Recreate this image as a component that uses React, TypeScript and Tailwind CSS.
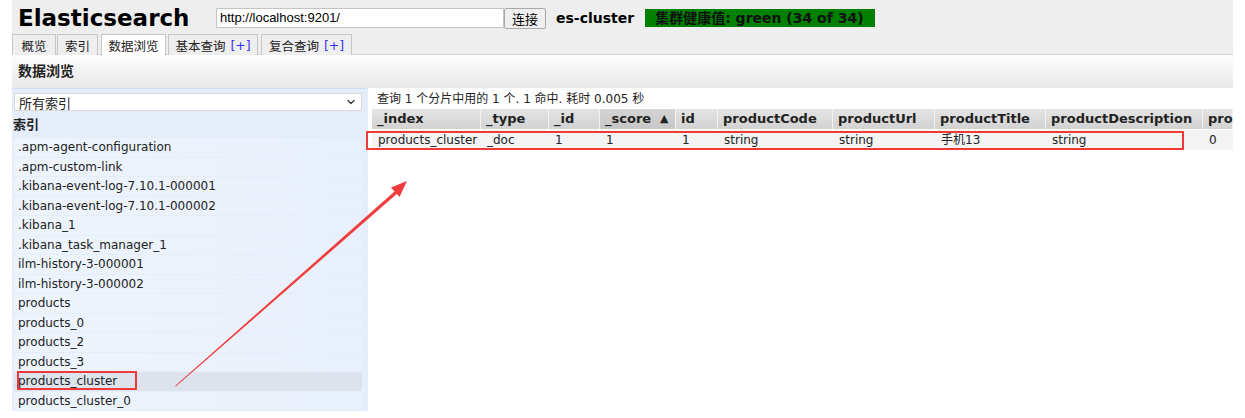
import React from 'react';
import { ChevronDown } from 'lucide-react';

const tabs = [
  { label: '概览', cls: 'w-[44px] ml-0', plus: false, active: false },
  { label: '索引', cls: 'w-[41px] ml-[1px]', plus: false, active: false },
  { label: '数据浏览', cls: 'w-[65px] ml-[3px]', plus: false, active: true },
  { label: '基本查询', cls: 'w-[90px] ml-[2px]', plus: true, active: false },
  { label: '复合查询', cls: 'w-[91px] ml-[3px]', plus: true, active: false },
];

const indices = [
  '.apm-agent-configuration',
  '.apm-custom-link',
  '.kibana-event-log-7.10.1-000001',
  '.kibana-event-log-7.10.1-000002',
  '.kibana_1',
  '.kibana_task_manager_1',
  'ilm-history-3-000001',
  'ilm-history-3-000002',
  'products',
  'products_0',
  'products_2',
  'products_3',
  'products_cluster',
  'products_cluster_0',
];

const columns = [
  { name: '_index', w: 'w-[109px]', value: 'products_cluster' },
  { name: '_type', w: 'w-[68px]', value: '_doc' },
  { name: '_id', w: 'w-[51px]', value: '1' },
  { name: '_score', w: 'w-[76px]', value: '1', sorted: true },
  { name: 'id', w: 'w-[42px]', value: '1' },
  { name: 'productCode', w: 'w-[115px]', value: 'string' },
  { name: 'productUrl', w: 'w-[102px]', value: 'string' },
  { name: 'productTitle', w: 'w-[111px]', value: '手机13' },
  { name: 'productDescription', w: 'w-[157px]', value: 'string' },
  { name: 'pro', w: 'w-[30px]', value: '0' },
];

const font = "font-['DejaVu_Sans','Noto_Sans_CJK_SC',sans-serif]";

export default function App() {
  return (
    <div className={`relative w-[1245px] h-[418px] overflow-hidden bg-white text-[#1a1a1a] ${font}`}>
      <div className="ml-3 w-[1221px]">
        {/* header */}
        <div className="h-[55px] bg-[#eeeeee] border-b border-[#cfcfcf]">
          <div className="flex items-center h-[34px] pt-[2px]">
            <h1 className="ml-[6px] w-[198px] text-[23px] font-bold leading-none text-black">Elasticsearch</h1>
            <div className="w-[288px] h-[20px] bg-white border border-[#c4c4c4] px-[3px] flex items-center text-[13px] font-['Liberation_Sans',sans-serif] text-black">
              http://localhost:9201/
            </div>
            <button className="w-[42px] h-[21px] bg-[#efefef] border border-[#a8a8a8] rounded-[2px] text-[13px] leading-none text-black font-['Noto_Sans_CJK_SC',sans-serif]">
              连接
            </button>
            <span className="ml-[10px] text-[14px] font-bold text-black">es-cluster</span>
            <div className="ml-[11px] w-[230px] h-[18px] bg-[#008000] pl-[10px] flex items-center text-[14px] font-bold leading-none text-[#111111]">
              集群健康值: green (34 of 34)
            </div>
          </div>
          <div className="flex items-end h-[21px]">
            {tabs.map((t) => (
              <div
                key={t.label}
                className={`${t.cls} h-[21px] flex items-center justify-center pt-[2px] border border-b-0 border-[#c6c6c6] text-[12.5px] text-[#222] font-['Noto_Sans_CJK_SC',sans-serif] ${
                  t.active ? 'bg-white h-[22px] relative top-[1px]' : 'bg-[#eeeeee]'
                }`}
              >
                {t.label}
                {t.plus && <span className="ml-[5px] text-[#3333ff] font-['DejaVu_Sans',sans-serif]">[+]</span>}
              </div>
            ))}
          </div>
        </div>

        {/* section title */}
        <div className="h-[33px] bg-gradient-to-b from-[#fdfdfd] to-[#e8e8e8] flex items-center pl-[6px]">
          <span className="text-[14px] font-bold text-[#222]">数据浏览</span>
        </div>

        {/* main */}
        <div className="flex">
          <div className="w-[356px] h-[323px] bg-[#e4edf9] border-t border-[#d3e0f2]">
            <div className="mt-[4px] ml-[2px] w-[348px] h-[18px] bg-white border border-[#d8d8d8] flex items-center justify-between px-[4px]">
              <span className="text-[13px] text-[#222] font-['Noto_Sans_CJK_SC',sans-serif] leading-none">所有索引</span>
              <ChevronDown className="w-[12px] h-[12px] text-[#333]" strokeWidth={2.5} />
            </div>
            <div className="h-[27px] pt-[1px] flex items-center text-[13px] font-bold text-[#222] pl-[1px]">索引</div>
            <div className="flex flex-col">
              {indices.map((name) => (
                <div
                  key={name}
                  className={`ml-[2px] w-[348px] h-[18.5px] mb-[1px] rounded-[4px] flex items-center pl-[4px] text-[12px] text-[#222] ${
                    name === 'products_cluster'
                      ? 'bg-[#dce3ed]'
                      : 'bg-gradient-to-r from-[#eef4fd] to-[#e8f0fb]'
                  }`}
                >
                  {name}
                </div>
              ))}
            </div>
          </div>

          <div className="flex-1 min-w-0 overflow-hidden pl-[4px]">
            <div className="h-[21px] pt-[4px] pl-[5px] text-[12px] leading-[14px] text-[#222]">
              查询 1 个分片中用的 1 个. 1 命中. 耗时 0.005 秒
            </div>
            <div className="flex whitespace-nowrap">
              {columns.map((c) => (
                <div key={c.name} className={`${c.w} shrink-0`}>
                  <div
                    className={`h-[20px] flex items-center pl-[5px] text-[13px] font-bold text-[#222] border-r border-[#f2f2f2] ${
                      c.sorted
                        ? 'bg-gradient-to-b from-[#d4d4d4] to-[#c6c6c6]'
                        : 'bg-gradient-to-b from-[#e4e4e4] to-[#d2d2d2]'
                    }`}
                  >
                    {c.name}
                    {c.sorted && <span className="ml-[9px] text-[11px]">▲</span>}
                  </div>
                  <div className="h-[21px] flex items-center pl-[6px] text-[12px] text-[#222] bg-[#f3f3f3] border-t border-white">
                    {c.value}
                  </div>
                </div>
              ))}
            </div>
          </div>
        </div>
      </div>

      {/* annotations */}
      <div className="absolute left-[366px] top-[131px] w-[818px] h-[19px] border-2 border-[#ef3a3a] pointer-events-none" />
      <div className="absolute left-[17px] top-[371px] w-[120px] h-[19px] border-2 border-[#ef3a3a] pointer-events-none" />
      <svg className="absolute inset-0 pointer-events-none" width="1245" height="418" viewBox="0 0 1245 418">
        <polygon points="175,386 175.8,386.6 398.4,192.6 396.2,190" fill="#f03c3c" />
        <polygon points="407,181 399.5,197 391,187.5" fill="#f03c3c" />
      </svg>
    </div>
  );
}
